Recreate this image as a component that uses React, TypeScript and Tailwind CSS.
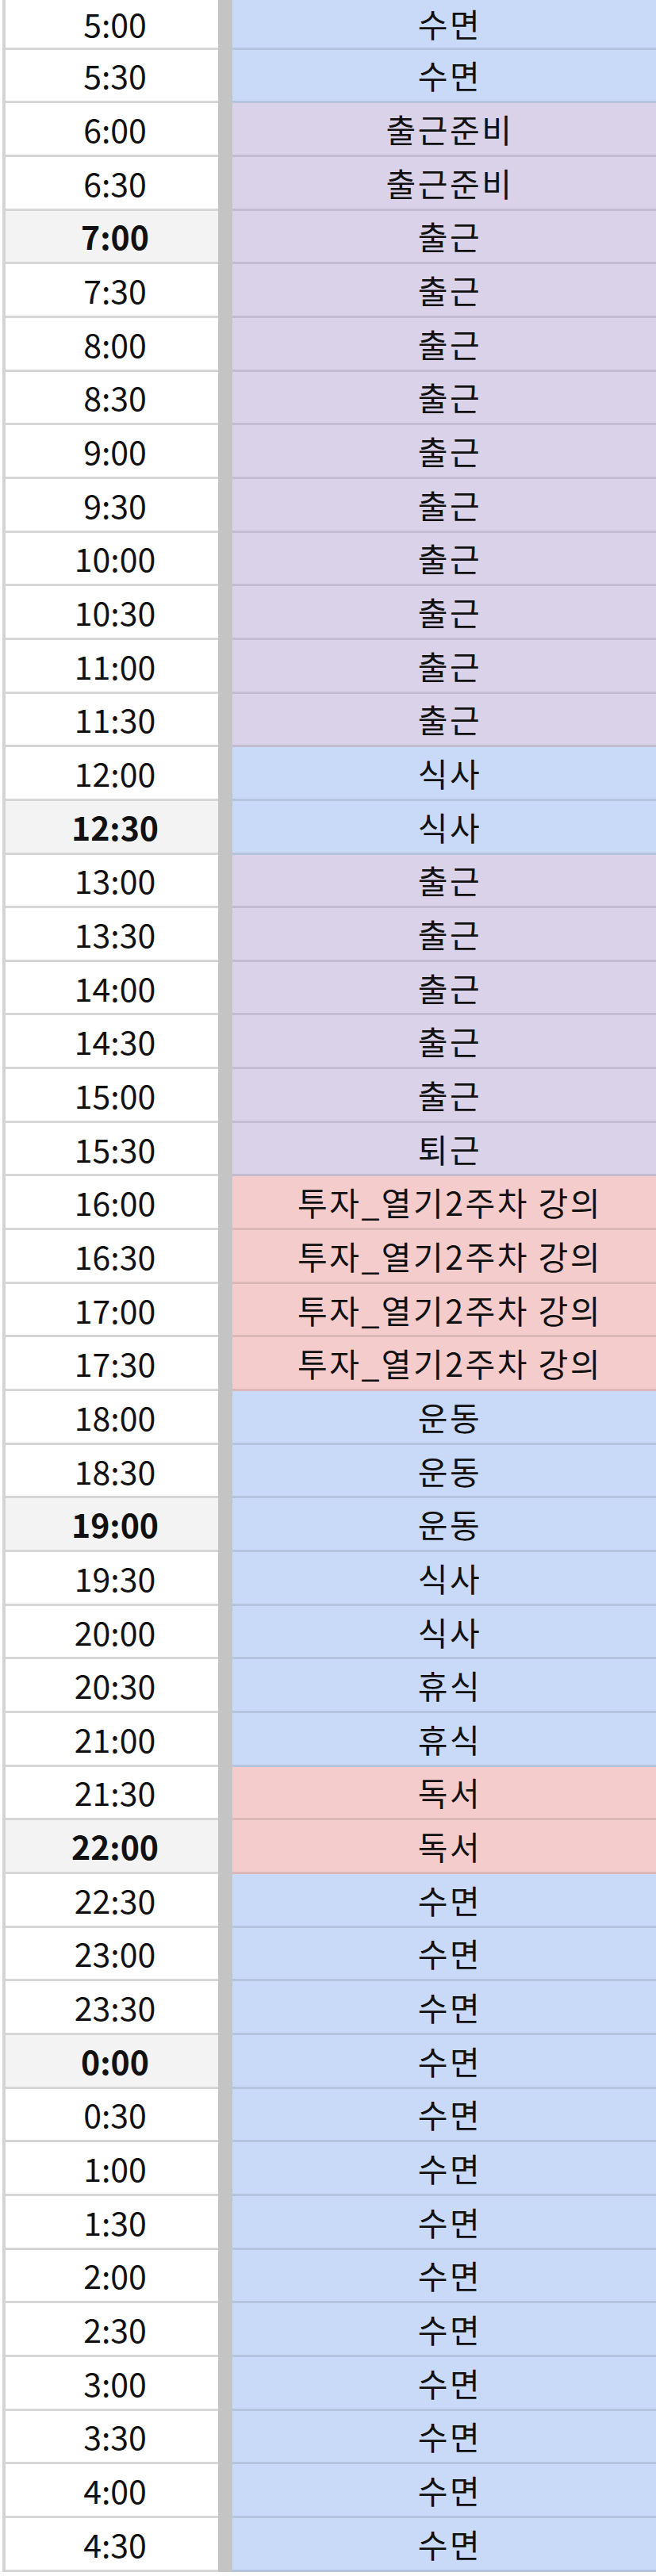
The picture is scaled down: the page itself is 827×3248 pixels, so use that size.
const blue = "bg-[#c9daf8]";
const purple = "bg-[#d9d2e9]";
const pink = "bg-[#f4cccc]";

type Slot = { time: string; task: string; color: string; bold?: boolean };

const slots: Slot[] = [
  { time: "5:00", task: "수면", color: blue },
  { time: "5:30", task: "수면", color: blue },
  { time: "6:00", task: "출근준비", color: purple },
  { time: "6:30", task: "출근준비", color: purple },
  { time: "7:00", task: "출근", color: purple, bold: true },
  { time: "7:30", task: "출근", color: purple },
  { time: "8:00", task: "출근", color: purple },
  { time: "8:30", task: "출근", color: purple },
  { time: "9:00", task: "출근", color: purple },
  { time: "9:30", task: "출근", color: purple },
  { time: "10:00", task: "출근", color: purple },
  { time: "10:30", task: "출근", color: purple },
  { time: "11:00", task: "출근", color: purple },
  { time: "11:30", task: "출근", color: purple },
  { time: "12:00", task: "식사", color: blue },
  { time: "12:30", task: "식사", color: blue, bold: true },
  { time: "13:00", task: "출근", color: purple },
  { time: "13:30", task: "출근", color: purple },
  { time: "14:00", task: "출근", color: purple },
  { time: "14:30", task: "출근", color: purple },
  { time: "15:00", task: "출근", color: purple },
  { time: "15:30", task: "퇴근", color: purple },
  { time: "16:00", task: "투자_열기2주차 강의", color: pink },
  { time: "16:30", task: "투자_열기2주차 강의", color: pink },
  { time: "17:00", task: "투자_열기2주차 강의", color: pink },
  { time: "17:30", task: "투자_열기2주차 강의", color: pink },
  { time: "18:00", task: "운동", color: blue },
  { time: "18:30", task: "운동", color: blue },
  { time: "19:00", task: "운동", color: blue, bold: true },
  { time: "19:30", task: "식사", color: blue },
  { time: "20:00", task: "식사", color: blue },
  { time: "20:30", task: "휴식", color: blue },
  { time: "21:00", task: "휴식", color: blue },
  { time: "21:30", task: "독서", color: pink },
  { time: "22:00", task: "독서", color: pink, bold: true },
  { time: "22:30", task: "수면", color: blue },
  { time: "23:00", task: "수면", color: blue },
  { time: "23:30", task: "수면", color: blue },
  { time: "0:00", task: "수면", color: blue, bold: true },
  { time: "0:30", task: "수면", color: blue },
  { time: "1:00", task: "수면", color: blue },
  { time: "1:30", task: "수면", color: blue },
  { time: "2:00", task: "수면", color: blue },
  { time: "2:30", task: "수면", color: blue },
  { time: "3:00", task: "수면", color: blue },
  { time: "3:30", task: "수면", color: blue },
  { time: "4:00", task: "수면", color: blue },
  { time: "4:30", task: "수면", color: blue },
];

// first row is partly scrolled out of view, so it is shorter
const rowH = (i: number) => (i === 0 ? "h-[62.67px]" : "h-[67.67px]");

function App() {
  return (
    <div
      className="w-[827px] h-[3248px] overflow-hidden bg-white text-[41px] text-[#111]"
      style={{ fontFamily: '"Noto Sans CJK KR", "Noto Sans", sans-serif' }}
    >
      <div className="flex pl-[3px]">
        {/* time column */}
        <div className="w-[272px] shrink-0 border-l-[4px] border-[#d4d4d4]">
          {slots.map((s, i) => (
            <div
              key={s.time}
              className={`${rowH(i)} flex items-center justify-center pl-[8px] leading-none border-b-[3px] border-[#d6d6d6] ${
                s.bold ? "bg-[#f3f3f3] font-bold" : "bg-white"
              }`}
            >
              {s.time}
            </div>
          ))}
        </div>
        {/* frozen column divider */}
        <div className="w-[18px] bg-[#c4c4c4] shrink-0" />
        {/* activity column */}
        <div className="w-[548px] shrink-0">
          {slots.map((s, i) => (
            <div
              key={s.time}
              className={`${rowH(i)} flex items-center justify-center leading-none tracking-[2.5px] whitespace-nowrap border-b-[3px] border-black/10 ${s.color}`}
            >
              {s.task}
            </div>
          ))}
        </div>
      </div>
    </div>
  );
}

export default App;
